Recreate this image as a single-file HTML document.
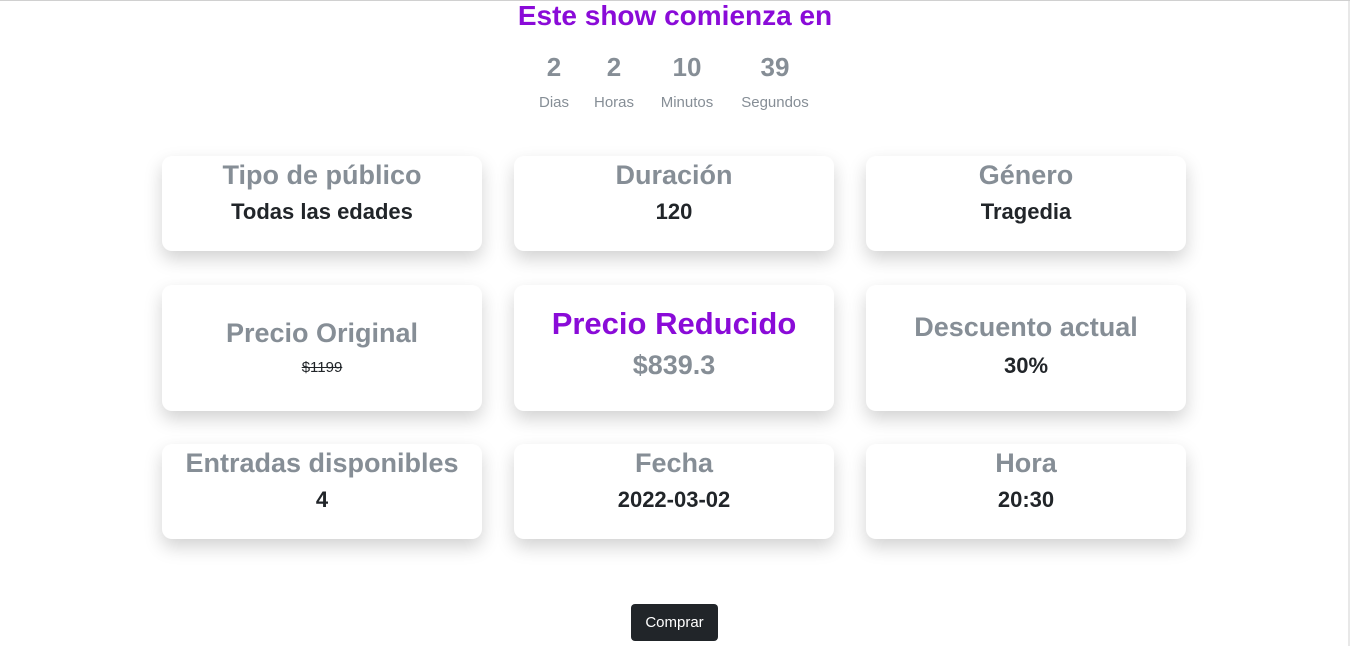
<!DOCTYPE html>
<html><head><meta charset="utf-8"><style>
body{margin:0;width:1350px;height:645px;background:#fff;font-family:"Liberation Sans",sans-serif;position:relative;overflow:hidden;border-top:1px solid #d0d0d0;box-sizing:border-box}
.t{position:absolute;left:0;width:1350px;text-align:center;top:-3px;font-size:28px;color:#8a0bd8;font-weight:bold;line-height:36px}
.cd{position:absolute;text-align:center;color:#868e96}
.cd b{display:block;font-size:26px;line-height:30px;font-weight:600}
.cd span{display:block;font-size:15px;margin-top:12px}
.card{position:absolute;width:320px;background:#fff;border-radius:10px;box-shadow:0 8px 18px rgba(0,0,0,.18);text-align:center}
.h{color:#868e96;font-size:27px;line-height:34px;font-weight:600}
.v{color:#212529;font-size:22px;line-height:30px;font-weight:600;margin-top:5px}
.btn{position:absolute;left:631px;top:603px;width:87px;height:37px;background:#212529;color:#fff;border-radius:4px;font-size:15px;line-height:37px;text-align:center}
</style></head><body>
<div class="t">Este show comienza en</div>
<div class="cd" style="left:534px;width:40px;top:51px"><b>2</b><span>Dias</span></div>
<div class="cd" style="left:588px;width:52px;top:51px"><b>2</b><span>Horas</span></div>
<div class="cd" style="left:652px;width:70px;top:51px"><b>10</b><span>Minutos</span></div>
<div class="cd" style="left:736px;width:78px;top:51px"><b>39</b><span>Segundos</span></div>

<div class="card" style="left:162px;top:155px;height:95px"><div class="h" style="margin-top:2px">Tipo de público</div><div class="v">Todas las edades</div></div>
<div class="card" style="left:514px;top:155px;height:95px"><div class="h" style="margin-top:2px">Duración</div><div class="v">120</div></div>
<div class="card" style="left:866px;top:155px;height:95px"><div class="h" style="margin-top:2px">Género</div><div class="v">Tragedia</div></div>

<div class="card" style="left:162px;top:284px;height:126px"><div class="h" style="margin-top:31px">Precio Original</div><div style="font-size:15px;color:#212529;text-decoration:line-through;margin-top:9px">$1199</div></div>
<div class="card" style="left:514px;top:284px;height:126px"><div class="h" style="margin-top:22px;color:#8a0bd8;font-size:31px">Precio Reducido</div><div class="h" style="margin-top:7px">$839.3</div></div>
<div class="card" style="left:866px;top:284px;height:126px"><div class="h" style="margin-top:25px">Descuento actual</div><div class="v" style="margin-top:7px">30%</div></div>

<div class="card" style="left:162px;top:443px;height:95px"><div class="h" style="margin-top:2px">Entradas disponibles</div><div class="v">4</div></div>
<div class="card" style="left:514px;top:443px;height:95px"><div class="h" style="margin-top:2px">Fecha</div><div class="v">2022-03-02</div></div>
<div class="card" style="left:866px;top:443px;height:95px"><div class="h" style="margin-top:2px">Hora</div><div class="v">20:30</div></div>

<div class="btn">Comprar</div>
<div style="position:absolute;right:0;top:0;width:2px;height:645px;background:#e8e8e8"></div>
</body></html>
